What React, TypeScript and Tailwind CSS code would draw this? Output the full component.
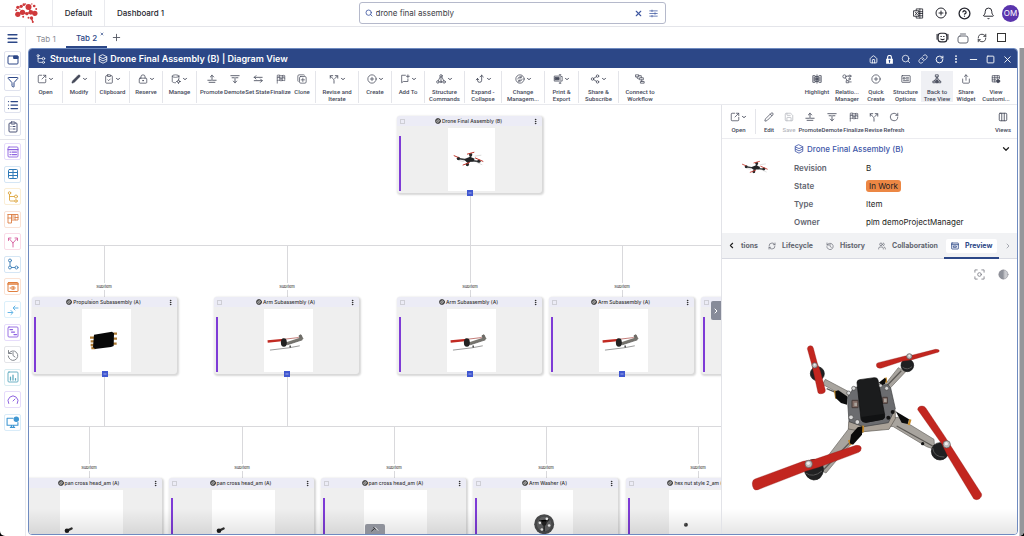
import { useState } from 'react';
import type { ReactNode } from 'react';
import {
  Bell,
  ChevronDown,
  ChevronLeft,
  ChevronRight,
  CircleHelp,
  CirclePlus,
  ClipboardCheck,
  ClipboardList,
  Columns3,
  EllipsisVertical,
  Funnel,
  Gauge,
  House,
  Link,
  List,
  LockKeyhole,
  Menu,
  Minus,
  Pencil,
  Plus,
  RefreshCw,
  RotateCw,
  Save,
  Search,
  Share,
  Share2,
  Square,
  SquareArrowOutUpRight,
  Table,
  Users,
  X,
} from 'lucide-react';

function Svg({ children, className = 'size-[10px]', width = 1.8 }: { children: ReactNode; className?: string; width?: number }) {
  return (
    <svg
      viewBox="0 0 24 24"
      fill="none"
      stroke="currentColor"
      strokeWidth={width}
      strokeLinecap="round"
      strokeLinejoin="round"
      className={`shrink-0 ${className}`}
      aria-hidden="true"
    >
      {children}
    </svg>
  );
}

const PromoteIcon = () => (
  <Svg width={2}><path d="M12 15V3M8 7l4-4 4 4M2 15h8M14 15h8M5 20h14" /></Svg>
);
const DemoteIcon = () => (
  <Svg width={2}><path d="M2 4h20M5 9h4M15 9h4M12 8v13M8 17l4 4 4-4" /></Svg>
);
const SetStateIcon = () => (
  <Svg width={2}><path d="M22 8H3M7 4 3 8l4 4M3 16h19M18 12l4 4-4 4" /></Svg>
);
const FinalizeIcon = () => (
  <Svg width={1.6}>
    <path d="M3 22V3c4-2 7 2 11 1 3-1 5-1 7 0v12c-3-1-5-1-7 0-4 1-7-2-11-1M9 3v12M15 4v12M3 9c4-2 7 1 11 1 3-1 5-1 7 0" />
    <path d="M9 9h6v6H9zM4 4h5v5H4zM15 4h5v5h-5z" fill="currentColor" fillOpacity=".4" stroke="none" />
  </Svg>
);
const CloneIcon = () => (
  <Svg width={1.7}><rect x="6" y="6" width="16" height="16" rx="3" /><path d="M18 3a3 3 0 0 0-2-1H5a3 3 0 0 0-3 3v11c0 1 1 2 1 2M14 10v8M10 14h8" /></Svg>
);
const ReviseIcon = () => (
  <Svg width={2}><path d="M12 22v-6c0-4-3-5-5-7L3 5M3 10V4h6M14 11l6-6M15 4h6v6" /></Svg>
);
const ManageIcon = () => (
  <Svg width={1.7}>
    <ellipse cx="11" cy="5" rx="8" ry="3" /><path d="M3 5v13c0 2 4 3 8 3M19 5v7" /><circle cx="18" cy="18" r="3" /><path d="M18 13v2M18 21v2M13 18h2M21 18h2" />
  </Svg>
);
const AddToIcon = () => (
  <Svg width={1.8}><path d="M13 3H4v18l4-3h11v-6M19 2v7M15.5 5.5h7" /></Svg>
);
const HierarchyIcon = () => (
  <Svg width={1.8}><circle cx="12" cy="4.5" r="3" /><circle cx="4.5" cy="19" r="3" /><circle cx="19.5" cy="19" r="3" /><circle cx="12" cy="19" r="2" /><path d="M12 8v9M10 7l-4.5 9M14 7l4.5 9" /></Svg>
);
const HookIcon = () => (
  <Svg width={2}><path d="M16 3v12a5 5 0 0 1-10 0v-4M6 11l-3 3M6 11l3 3M12 7l4-4 4 4" /></Svg>
);
const ChangeIcon = () => (
  <Svg width={1.8}><circle cx="12" cy="12" r="10" /><path d="M7 12a5 5 0 0 1 8-4M17 12a5 5 0 0 1-8 4M15 5v3h-3M9 19v-3h3M11 12h2" /></Svg>
);
const PrintIcon = () => (
  <Svg width={1.8}><path d="M14 5H3v12h11M6 8h8v6H6zM17 2v20M15 2h4M15 22h4M20 6h2v11h-2" /><path d="M6 9h8v4H6z" fill="currentColor" /></Svg>
);
const WorkflowIcon = () => (
  <Svg width={1.8}><rect x="2" y="2" width="7" height="5" /><rect x="12" y="9" width="8" height="5" /><rect x="14" y="18" width="8" height="4" /><path d="M9 4h6v5M16 14v4M5 7v3l4 2" /></Svg>
);
const HighlightIcon = () => (
  <Svg width={2}><path d="M7 4H2v16h5M17 4h5v16h-5M5 8v8M19 8v8" /><rect x="8" y="6" width="8" height="12" /><path d="M10 9h4v6h-4zM12 2v4M12 18v4" fill="currentColor" /></Svg>
);
const RelationIcon = () => (
  <Svg width={1.8}><circle cx="6" cy="6" r="4" /><circle cx="19" cy="5" r="2.5" /><circle cx="18" cy="12" r="2" /><path d="M8 9l4 6M12 5h4" /><rect x="11" y="16" width="5" height="5" /><path d="M18 19h4" /></Svg>
);
const OptionsIcon = () => (
  <Svg width={1.8}><rect x="2" y="4" width="20" height="16" rx="1" /><path d="M6 9h4v3H6zM13 9h5M13 12h5M6 16h12" /></Svg>
);
const TreeViewIcon = () => (
  <Svg width={2}><rect x="9" y="2" width="6" height="5" /><path d="M12 7v14M12 8 5 17M12 8l7 9M3 17h5v4H3zM16 17h5v4h-5z" /><path d="M10 15h4v6h-4z" fill="currentColor" /></Svg>
);
const CustomViewIcon = () => (
  <Svg width={1.8}><path d="M11 19H3V4h17v7M3 9h17M9 4v15M15 4v7M3 14h8" /><circle cx="17" cy="17" r="4" fill="currentColor" /></Svg>
);
const TreeIcon = ({ className }: { className?: string }) => (
  <Svg className={className} width={1.8}><circle cx="5" cy="4" r="2.5" /><circle cx="18" cy="11" r="3" /><circle cx="18" cy="20" r="2.5" /><path d="M5 7v11c0 1 1 2 2 2h8M5 11h10" /></Svg>
);
const LayersIcon = ({ className }: { className?: string }) => (
  <Svg className={className} width={2}><path d="m12 2 9 4.5v11L12 22l-9-4.5v-11zM3 7l9 4 9-4M3 12l9 4.5 9-4.5" /></Svg>
);
const HistoryIcon = ({ className }: { className?: string }) => (
  <Svg className={className} width={2}><path d="M3 3v6h6M3.5 9a9.5 9.5 0 1 1-1 5M12 7v6l4 3" /></Svg>
);
const ItemIcon = () => (
  <Svg className="size-[6px]" width={3}><circle cx="12" cy="12" r="10" fill="#555" stroke="#333" /><path d="M6 13l6-7 6 4-6 8zM9 12h7" stroke="#ddd" strokeWidth="2" /></Svg>
);

const Logo = () => (
  <svg viewBox="40 7 74 66" className="h-[22px] w-[25px]" role="img" aria-label="Logo">
    <g fill="#cf3a3c">
      <circle cx="83" cy="22" r="9" /><circle cx="61" cy="20" r="5" /><circle cx="69" cy="15" r="4" /><circle cx="51" cy="23" r="5" />
      <circle cx="51" cy="44" r="8" /><circle cx="65" cy="38" r="8" /><circle cx="78" cy="42" r="5" /><circle cx="90" cy="38" r="7" />
      <circle cx="102" cy="41" r="8" /><circle cx="100" cy="19" r="4" /><circle cx="106" cy="28" r="3" /><circle cx="46" cy="32" r="3" />
      <circle cx="57" cy="29" r="2" /><circle cx="74" cy="13" r="2" /><circle cx="67" cy="51" r="3" /><circle cx="83" cy="54" r="3" />
      <circle cx="92" cy="55" r="5" /><circle cx="96" cy="67" r="3" /><circle cx="93" cy="13" r="2" />
    </g>
    <path d="M51 43l14-5 13 4 12-4 12 3M83 22l7 16M92 56l4 11" stroke="#cf3a3c" strokeWidth="4" fill="none" />
  </svg>
);

type Tool = { label: string; icon: ReactNode; width: string; menu?: boolean; active?: boolean; disabled?: boolean };

function ToolButton({ label, icon, width, menu, active, disabled }: Tool) {
  return (
    <button
      type="button"
      disabled={disabled}
      className={`flex h-[31px] shrink-0 flex-col items-center pt-[3px] font-['Roboto',sans-serif] text-[6px] leading-[7px] font-medium ${width} ${active ? 'bg-[#eff0f4]' : ''} ${disabled ? 'text-[#b4b6bd]' : 'text-[#454959]'}`}
    >
      <span className="flex h-[10px] items-center gap-[1px]">
        {icon}
        {menu && <ChevronDown className="size-[6px]" strokeWidth={4} />}
      </span>
      <span className="mt-[4px] whitespace-pre text-center">{label}</span>
    </button>
  );
}

const ic = 'size-[10px] shrink-0';

const toolGroups: Tool[][] = [
  [{ label: 'Open', icon: <SquareArrowOutUpRight className={ic} strokeWidth={1.8} />, width: 'w-[33px]', menu: true }],
  [{ label: 'Modify', icon: <Pencil className={ic} fill="currentColor" strokeWidth={1} />, width: 'w-[32px]', menu: true }],
  [{ label: 'Clipboard', icon: <ClipboardCheck className={ic} strokeWidth={1.8} />, width: 'w-[33px]', menu: true }],
  [{ label: 'Reserve', icon: <LockKeyhole className={ic} strokeWidth={1.8} />, width: 'w-[32px]', menu: true }],
  [{ label: 'Manage', icon: <ManageIcon />, width: 'w-[33px]', menu: true }],
  [
    { label: 'Promote', icon: <PromoteIcon />, width: 'w-[29px]' },
    { label: 'Demote', icon: <DemoteIcon />, width: 'w-[17px]' },
    { label: 'Set State', icon: <SetStateIcon />, width: 'w-[29px]' },
    { label: 'Finalize', icon: <FinalizeIcon />, width: 'w-[17px]' },
    { label: 'Clone', icon: <CloneIcon />, width: 'w-[26px]' },
  ],
  [{ label: 'Revise and\nIterate', icon: <ReviseIcon />, width: 'w-[42px]', menu: true }],
  [{ label: 'Create', icon: <CirclePlus className={ic} strokeWidth={1.8} />, width: 'w-[32px]', menu: true }],
  [{ label: 'Add To', icon: <AddToIcon />, width: 'w-[32px]', menu: true }],
  [{ label: 'Structure\nCommands', icon: <HierarchyIcon />, width: 'w-[39px]', menu: true }],
  [{ label: 'Expand -\nCollapse', icon: <HookIcon />, width: 'w-[36px]', menu: true }],
  [{ label: 'Change\nManagem...', icon: <ChangeIcon />, width: 'w-[42px]', menu: true }],
  [{ label: 'Print &\nExport', icon: <PrintIcon />, width: 'w-[33px]', menu: true }],
  [{ label: 'Share &\nSubscribe', icon: <Share2 className={ic} strokeWidth={1.8} />, width: 'w-[39px]', menu: true }],
  [{ label: 'Connect to\nWorkflow', icon: <WorkflowIcon />, width: 'w-[42px]' }],
];

const viewTools: Tool[] = [
  { label: 'Highlight', icon: <HighlightIcon />, width: 'w-[30px]' },
  { label: 'Relatio...\nManager', icon: <RelationIcon />, width: 'w-[30px]' },
  { label: 'Quick\nCreate', icon: <CirclePlus className={ic} strokeWidth={1.8} />, width: 'w-[28px]' },
  { label: 'Structure\nOptions', icon: <OptionsIcon />, width: 'w-[31px]' },
  { label: 'Back to\nTree View', icon: <TreeViewIcon />, width: 'w-[32px]', active: true },
  { label: 'Share\nWidget', icon: <Share className={ic} strokeWidth={1.8} />, width: 'w-[26px]' },
  { label: 'View\nCustomi...', icon: <CustomViewIcon />, width: 'w-[34px]' },
];

const itemTools: Tool[] = [
  { label: 'Edit', icon: <Pencil className={ic} strokeWidth={1.8} />, width: 'w-[20px]' },
  { label: 'Save', icon: <Save className={ic} strokeWidth={1.8} />, width: 'w-[20px]', disabled: true },
  { label: 'Promote', icon: <PromoteIcon />, width: 'w-[22px]' },
  { label: 'Demote', icon: <DemoteIcon />, width: 'w-[22px]' },
  { label: 'Finalize', icon: <FinalizeIcon />, width: 'w-[21px]' },
  { label: 'Revise', icon: <ReviseIcon />, width: 'w-[19px]' },
  { label: 'Refresh', icon: <RotateCw className={ic} strokeWidth={1.8} />, width: 'w-[22px]' },
];

const rail = 'size-[12px]';
const railTop = [
  { name: 'Dashboards', color: 'text-[#2c4787] border-[#dfe2ee]', icon: <Svg className={rail} width={2}><rect x="2" y="4" width="20" height="16" rx="2" /><path d="M14 4h8v5h-8z" fill="currentColor" /></Svg> },
  { name: 'Filter', color: 'text-[#2c4787] border-[#dfe2ee]', icon: <Funnel className={rail} strokeWidth={2} /> },
  { name: 'List', color: 'text-[#2c4787] border-[#dfe2ee]', icon: <List className={rail} strokeWidth={2.5} /> },
  { name: 'Tasks', color: 'text-[#4b5377] border-[#dfe2ee]', icon: <ClipboardList className={rail} strokeWidth={2} /> },
];
const railItems = [
  { name: 'Properties', color: 'text-[#8e63e0] border-[#e6dcfb]', icon: <Svg className={rail}><rect x="2" y="2" width="20" height="20" rx="2" /><path d="M2 7h20M6 12h1M10 12h9M6 17h1M10 17h9" strokeWidth="2.5" /></Svg> },
  { name: 'Table', color: 'text-[#2f7ab8] border-[#d5e6f5]', icon: <Table className={rail} strokeWidth={2} /> },
  { name: 'Structure', color: 'text-[#dda53d] border-[#fbeed5]', icon: <TreeIcon className={rail} /> },
  { name: 'Board', color: 'text-[#dc7f45] border-[#fae2d5]', icon: <Svg className={rail}><path d="M2 3h20v11h-6V3M2 3v17h7V3M9 14h7M2 10h7M16 9h6M12 3v8" /></Svg> },
  { name: 'Branch', color: 'text-[#d4589b] border-[#fadce8]', icon: <Svg className={rail}><path d="M12 22v-8L5 6M12 14l7-8M3 9V4h5M16 4h5v5" /></Svg> },
  { name: 'Network', color: 'text-[#3f80b8] border-[#d5e6f5]', icon: <Svg className={rail}><circle cx="6" cy="5" r="3" /><circle cx="6" cy="19" r="3" /><circle cx="19" cy="19" r="3" /><path d="M6 8v8M9 19h7" /></Svg> },
  { name: 'Preview', color: 'text-[#e07f3e] border-[#fbe2d3]', icon: <Svg className={rail} width={2}><rect x="2" y="3" width="20" height="18" rx="1" /><path d="M2 6h20" strokeWidth="3" /><path d="M7 14c3-4 7-4 10 0-3 4-7 4-10 0z" /><circle cx="12" cy="14" r="1" /></Svg> },
  { name: 'Compare', color: 'text-[#62b4e6] border-[#dcf0fb]', icon: <Svg className={rail} width={2}><path d="M2 17h9M8 13l4 4-4 4M22 8h-9M16 4l-4 4 4 4" /></Svg> },
  { name: 'Gantt', color: 'text-[#8e63e0] border-[#e6dcfb]', icon: <Svg className={rail}><rect x="2" y="2" width="20" height="20" rx="2" /><path d="M6 7h5M9 12h6M14 17h5" strokeWidth="2.5" /></Svg> },
  { name: 'History', color: 'text-[#85898f] border-[#e4e5e9]', icon: <HistoryIcon className={rail} /> },
  { name: 'Charts', color: 'text-[#5ba8bd] border-[#d9edf2]', icon: <Svg className={rail}><rect x="2" y="2" width="20" height="20" rx="2" /><path d="M7 18v-6M12 18V8M17 18v-3" strokeWidth="2.5" /></Svg> },
  { name: 'Metrics', color: 'text-[#8e63e0] border-[#e6dcfb]', icon: <Gauge className={rail} strokeWidth={2} /> },
  { name: 'Monitor', color: 'text-[#3f97d2] border-[#d9ecf9]', icon: <Svg className="size-[13px]" width={2}><path d="M13 4H2v13h20v-5M8 21h8M10 17v4M14 17v4" /><circle cx="19" cy="6" r="4" fill="currentColor" /></Svg> },
];

const DroneThumb = ({ viewBox, className = 'size-full' }: { viewBox: string; className?: string }) => (
  <svg viewBox={viewBox} className={className} aria-hidden="true">
    <path d="M235 160l30 5 32 4M262 178l8-14 5-20" stroke="#3c3e40" strokeWidth="5" fill="none" />
    <path d="M253 162l18-7 14 6-4 8-20 2z" fill="#222426" />
    <path d="M238 166l14 3M290 171l18 8M285 153l20-3" stroke="#b9b9b9" strokeWidth="1.5" />
    <g fill="#26282a"><circle cx="236" cy="160" r="5" /><circle cx="298" cy="168" r="5" /><circle cx="273" cy="149" r="5" /><circle cx="263" cy="178" r="5" /></g>
    <path d="M222 151l14 6M262 147l22-6M286 158l25 11M249 180l21-8" stroke="#bd3328" strokeWidth="3" />
  </svg>
);

const ArmThumb = () => (
  <svg viewBox="252 86 148 190" className="size-full" aria-hidden="true">
    <path d="M318 191l48-16M360 164l8 14" stroke="#77756f" strokeWidth="8" />
    <path d="M322 194l46-15" stroke="#44433f" strokeWidth="2" />
    <circle cx="362" cy="169" r="5" fill="#6d6b66" />
    <path d="M270 210l58-7 32-6" stroke="#999" strokeWidth="3" fill="none" />
    <path d="M263 184l50-5" stroke="#c12a22" strokeWidth="7" />
    <path d="M315 177l42-5" stroke="#a63b35" strokeWidth="2" />
    <ellipse cx="312" cy="187" rx="9" ry="13" fill="#222" />
    <path d="M331 196v6" stroke="#333" strokeWidth="4" />
  </svg>
);

const PropulsionThumb = () => (
  <svg viewBox="246 627 147 189" className="size-full" aria-hidden="true">
    <path d="M270 713h14M272 724h12M272 735h12M274 744h12M340 701h11M340 716h11M338 731h12" stroke="#b07d36" strokeWidth="7" />
    <path d="M282 704l54-9 6 5-1 38-8 3-48 6-6-5z" fill="#080808" />
  </svg>
);

const ScrewThumb = () => (
  <svg viewBox="180 209 190 190" className="size-full" aria-hidden="true">
    <path d="M201 332l14-7" stroke="#303030" strokeWidth="7" strokeLinecap="round" />
    <circle cx="201" cy="332" r="7" fill="#1d1d1d" />
  </svg>
);

const WasherThumb = () => (
  <svg viewBox="456 209 155 190" className="size-full" aria-hidden="true">
    <circle cx="525" cy="312" r="30" fill="#494a4b" />
    <circle cx="525" cy="312" r="22" fill="#606162" />
    <path d="M510 300l15 12 15-14M525 312v22" stroke="#2d2e2f" strokeWidth="5" />
    <circle cx="525" cy="310" r="7" fill="#222" />
    <g fill="#eee"><circle cx="512" cy="308" r="4" /><circle cx="533" cy="296" r="4" /><circle cx="540" cy="316" r="4" /><circle cx="518" cy="328" r="4" /></g>
  </svg>
);

const NutThumb = () => (
  <svg viewBox="894 209 190 190" className="size-full" aria-hidden="true">
    <circle cx="945" cy="314" r="6" fill="#3b3b3b" /><circle cx="942" cy="311" r="2" fill="#bbb" />
  </svg>
);

type Node = { title: string; place: string; picture: ReactNode; box: string; expandable?: boolean };

// places are relative to the canvas corner
const nodes: Node[] = [
  { title: 'Drone Final Assembly (B)', place: 'left-[368px] top-[11px]', picture: <DroneThumb viewBox="205 68 141 190" />, box: 'w-[47px]', expandable: true },
  { title: 'Propulsion Subassembly (A)', place: 'left-[3px] top-[192px]', picture: <PropulsionThumb />, box: 'w-[49px]', expandable: true },
  { title: 'Arm Subassembly (A)', place: 'left-[185px] top-[192px]', picture: <ArmThumb />, box: 'w-[49px]', expandable: true },
  { title: 'Arm Subassembly (A)', place: 'left-[368px] top-[192px]', picture: <ArmThumb />, box: 'w-[49px]', expandable: true },
  { title: 'Arm Subassembly (A)', place: 'left-[520px] top-[192px]', picture: <ArmThumb />, box: 'w-[49px]', expandable: true },
  { title: 'Arm Subassembly (A)', place: 'left-[672px] top-[192px]', picture: <ArmThumb />, box: 'w-[49px]', expandable: true },
  { title: 'pan cross head_am (A)', place: 'left-[-12px] top-[373px]', picture: <ScrewThumb />, box: 'w-[63px]' },
  { title: 'pan cross head_am (A)', place: 'left-[140px] top-[373px]', picture: <ScrewThumb />, box: 'w-[63px]' },
  { title: 'pan cross head_am (A)', place: 'left-[292px] top-[373px]', picture: <ScrewThumb />, box: 'w-[63px]' },
  { title: 'Arm Washer (A)', place: 'left-[444px] top-[373px]', picture: <WasherThumb />, box: 'w-[52px]' },
  { title: 'hex nut style 2_am (A)', place: 'left-[597px] top-[373px]', picture: <NutThumb />, box: 'w-[63px]' },
];

const links = [
  { x: 75, y: 140, to: 193 },
  { x: 258, y: 140, to: 193 },
  { x: 441, y: 140, to: 193 },
  { x: 593, y: 140, to: 193 },
  { x: 60, y: 321, to: 374 },
  { x: 213, y: 321, to: 374 },
  { x: 365, y: 321, to: 374 },
  { x: 517, y: 321, to: 374 },
  { x: 669, y: 321, to: 374 },
];

function NodeCard({ title, place, picture, box, expandable }: Node) {
  return (
    <article className={`absolute h-[77px] w-[145px] rounded-[3px] bg-[#efefef] shadow-[1px_1px_2px_1px_rgba(0,0,0,0.16)] ${place}`}>
      <header className="flex h-[10px] items-center justify-between rounded-t-[3px] bg-[#ececf6] px-[3px]">
        <input type="checkbox" aria-label={`Select ${title}`} className="size-[5px] appearance-none border border-[#cfcfd6]" />
        <h3 className="flex items-center gap-[1px] whitespace-nowrap text-[5px] leading-[8px] font-medium text-[#333]">
          <ItemIcon />
          {title}
        </h3>
        <button type="button" aria-label={`${title} menu`} className="text-[#222]">
          <EllipsisVertical className="size-[7px]" strokeWidth={3} />
        </button>
      </header>
      <div className="relative flex h-[67px] justify-center pt-[2px] pl-[3px]">
        <span className="absolute bottom-[2px] left-[2px] h-[55px] w-[2px] bg-[#7e3bd6]" />
        <div className={`h-[63px] bg-white ${box}`}>{picture}</div>
      </div>
      {expandable && (
        <button type="button" aria-label={`Collapse ${title}`} className="absolute bottom-[-3px] left-[70px] flex size-[6px] items-center justify-center bg-[#4057d0] text-white">
          <Minus className="size-[4px]" strokeWidth={3} />
        </button>
      )}
    </article>
  );
}

function Diagram() {
  return (
    <section aria-label="Diagram" className="relative min-w-0 flex-1 overflow-hidden bg-white">
      <svg className="absolute inset-0 size-full" stroke="#d9d9dc" aria-hidden="true">
        <path d="M0 140.5H2000M0 321.5H2000M441.5 88V140M75.5 269V321M258.5 269V321" />
        {links.map((l) => (
          <path key={`${l.x}-${l.y}`} d={`M${l.x + 0.5} ${l.y}V${l.to}`} />
        ))}
      </svg>
      {links.map((l) => (
        <span
          key={`${l.x}-${l.y}`}
          className="absolute h-[7px] w-[18px] bg-white text-center text-[4px] leading-[7px] text-[#222]"
          style={{ left: l.x - 9, top: l.y + 38 }}
        >
          SubItem
        </span>
      ))}
      {nodes.map((n) => (
        <NodeCard key={n.place} {...n} />
      ))}
      <div className="pointer-events-none absolute inset-x-0 bottom-0 h-[26px] bg-gradient-to-b from-transparent to-black/10" />
      <button type="button" aria-label="Toggle panel" className="absolute top-[196px] right-0 flex h-[19px] w-[10px] items-center justify-center rounded-l-[2px] bg-[#878b99] text-white">
        <ChevronRight className="size-[8px]" strokeWidth={3} />
      </button>
      <div className="absolute bottom-0 left-[336px] flex h-[10px] w-[20px] items-center justify-center rounded-t-[2px] bg-[#8f929b] text-[#333]">
        <Svg className="size-[8px]" width={3}><path d="M2 18l7-6M8 8l5 5" /><path d="M14 8l7 8" stroke="#ddd" /></Svg>
      </div>
    </section>
  );
}

// Large 3D preview of the assembly
function DronePreview() {
  return (
    <svg viewBox="0 0 861 642" className="h-[214px] w-[287px]" role="img" aria-label="Drone preview">
      <g fill="#a8a49e" stroke="#6a6762" strokeWidth="2">
        <path d="M286 178l72 38-4 20-76-43z" />
        <path d="M505 143l22 12-50 53-14-12z" />
        <path d="M357 325l43 10-62 64-50 60-24-12z" />
        <path d="M478 294l26-2 108 66 2 30-24-8-100-60-16-2z" />
      </g>
      <path d="M290 206l66 28M470 198l44-46M282 448l75-78M500 318l108 60" stroke="#5d5a56" strokeWidth="4" />
      <path d="M356 305l-1 22 46 8 76-7 19-32v-24z" fill="#aaa298" stroke="#5a5650" strokeWidth="2" />
      <path d="M372 202l102-8 8 10 14 62-21 42-74 12-44-15-5-72z" fill="#6b6c6f" stroke="#3d3e40" strokeWidth="2" />
      <path d="M366 241h18v22h-18zM458 232h14v18h-14z" fill="#826d66" stroke="#463c39" strokeWidth="3" />
      <path d="M373 248h8v10h-8zM462 236h8v10h-8z" fill="#a9a29b" />
      <path d="M315 212l4 24M467 173l1 15M541 298l-5 17M399 317l-1 20M357 360l5 15" stroke="#c58c2c" strokeWidth="7" />
      <g fill="#0b0b0b">
        <path d="M316 214l9-3 26 18v25l-18-5-16-15z" />
        <path d="M446 188l18-14 4 3-3 15-8 4z" />
        <path d="M497 274l40 24-4 14-18-4z" />
        <path d="M397 319l-1 25-27 30-10-4 4-26 20-22z" />
      </g>
      <path d="M381 188q0-8 8-9l44-6q9-1 11 7l20 104q1 12-7 14l-49 9q-12 1-15-9z" fill="#1b1c1d" stroke="#0c0c0c" strokeWidth="2" />
      <path d="M394 291l69-10 1 12q-1 5-7 6l-49 9q-10 0-13-7z" fill="#111213" />
      <g fill="#d8d8d8" stroke="#4b4b4b" strokeWidth="2">
        <circle cx="371" cy="205" r="6" /><circle cx="356" cy="219" r="6" /><circle cx="363" cy="292" r="7" /><circle cx="382" cy="306" r="7" /><circle cx="452" cy="197" r="5" /><circle cx="470" cy="205" r="6" />
      </g>
      <g fill="#141414"><circle cx="488" cy="276" r="6" /><circle cx="475" cy="293" r="6" /><circle cx="578" cy="371" r="5" /></g>
      <g fill="#202122" stroke="#111" strokeWidth="2">
        <circle cx="262" cy="161" r="21" /><circle cx="532" cy="136" r="19" /><circle cx="630" cy="394" r="26" />
        <path d="M222 446q5-26 30-28 26 1 29 31-5 31-30 31-25-4-29-34z" />
      </g>
      <path d="M608 384q4 28 35 27M227 459q22 16 49-6M518 142q14 10 28-2" stroke="#555" strokeWidth="3" fill="none" />
      <g fill="#c2261f" stroke="#8e1914" strokeWidth="1" strokeLinejoin="round">
        <path d="M232 86q0-7 8-9 8-1 10 7l12 46 8 20 16 60q1 8-6 10-11 4-16-2l-17-78z" />
        <path d="M439 135q0-6 6-7l80-20 24-3 67-17q12-1 12 5 0 4-12 6l-69 20-28 4-64 21q-15 3-16-9z" />
        <path d="M67 488q1-9 8-11l144-53 35-6 124-42q14-2 16 8 0 9-8 13l-120 45-38 11-144 56q-9 3-13-3-5-8-4-18z" />
        <path d="M563 269q0-10 13-11 8 0 12 7l57 85 20 32 90 140q2 8-6 14-10 6-18 0L652 406l-16-33z" />
      </g>
      <g fill="#bdbdbd" stroke="#555" strokeWidth="2">
        <circle cx="254" cy="136" r="8" /><circle cx="538" cy="109" r="8" /><circle cx="236" cy="432" r="11" /><circle cx="650" cy="373" r="11" />
      </g>
      <g fill="#eee"><circle cx="254" cy="134" r="3" /><circle cx="538" cy="107" r="3" /><circle cx="235" cy="430" r="5" /><circle cx="649" cy="371" r="5" /></g>
    </svg>
  );
}

const tabs = [
  { name: 'Lifecycle', icon: <RefreshCw className="size-[8px]" strokeWidth={2} />, place: 'ml-[10px]' },
  { name: 'History', icon: <HistoryIcon className="size-[8px]" />, place: 'ml-[13px]' },
  { name: 'Collaboration', icon: <Users className="size-[8px]" strokeWidth={2} />, place: 'ml-[13px]' },
];

function ItemPanel() {
  const [tab, setTab] = useState('Preview');

  return (
    <aside className="flex w-[296px] shrink-0 flex-col border-l border-[#e2e3e8] bg-white">
      <div className="flex h-[34px] shrink-0 items-start border-b border-[#ececf0] pt-[4px]">
        <ToolButton label="Open" icon={<SquareArrowOutUpRight className={ic} strokeWidth={1.8} />} width="w-[33px]" menu />
        <span className="mr-[3px] h-[25px] w-px bg-[#e4e5ea]" />
        {itemTools.map((t) => (
          <ToolButton key={t.label} {...t} />
        ))}
        <span className="flex-1" />
        <ToolButton label="Views" icon={<Columns3 className={ic} strokeWidth={2} />} width="w-[28px]" />
      </div>

      <div className="flex h-[94px] shrink-0 pt-[1px]">
        <div className="flex w-[72px] shrink-0 justify-center pt-[18px] pr-[6px]">
          <DroneThumb viewBox="218 136 98 50" className="h-[18px] w-[28px]" />
        </div>
        <div className="min-w-0 flex-1 text-[8px] leading-[18px]">
          <div className="flex items-center gap-[3px] text-[#4157a8]">
            <LayersIcon className="size-[10px]" />
            <h2 className="flex-1 font-medium">Drone Final Assembly (B)</h2>
            <button type="button" aria-label="Collapse details" className="mr-[6px] text-[#222]">
              <ChevronDown className="size-[10px]" strokeWidth={3} />
            </button>
          </div>
          <dl className="mt-[1px] grid grid-cols-[72px_1fr] text-[#1c1d22]">
            <dt className="font-semibold text-[#62656f]">Revision</dt>
            <dd>B</dd>
            <dt className="font-semibold text-[#62656f]">State</dt>
            <dd className="flex items-center"><span className="rounded-[3px] bg-[#ec8744] px-[3px] leading-[12px]">In Work</span></dd>
            <dt className="font-semibold text-[#62656f]">Type</dt>
            <dd>Item</dd>
            <dt className="font-semibold text-[#62656f]">Owner</dt>
            <dd>plm demoProjectManager</dd>
          </dl>
        </div>
      </div>

      <nav className="flex h-[26px] shrink-0 items-center border-b border-[#d8dae2] bg-[#f1f2f4] pl-[5px] text-[7px] leading-[10px] font-bold text-[#62656f]">
        <button type="button" aria-label="Previous tabs" className="text-[#222]"><ChevronLeft className="size-[9px]" strokeWidth={3} /></button>
        <button type="button" onClick={() => setTab('Relations')} className="ml-[5px]">tions</button>
        {tabs.map((t) => (
          <button key={t.name} type="button" onClick={() => setTab(t.name)} className={`flex items-center gap-[6px] ${t.place}`}>
            {t.icon}
            {t.name}
          </button>
        ))}
        <button
          type="button"
          onClick={() => setTab('Preview')}
          className={`ml-[6px] flex h-[26px] items-center border-b-2 px-[2px] pt-[2px] ${tab === 'Preview' ? 'border-[#2c4787] text-[#2c4787]' : 'border-transparent'}`}
        >
          <span className="flex h-[14px] items-center gap-[6px] rounded-[2px] bg-white px-[5px]">
            <Svg className="size-[8px]" width={2.4}><rect x="2" y="3" width="20" height="18" rx="1" /><path d="M2 8h20M8 12h8v4H8z" /></Svg>
            Preview
          </span>
        </button>
        <button type="button" aria-label="Next tabs" className="mr-[5px] ml-auto text-[#999ca6]"><ChevronRight className="size-[8px]" strokeWidth={2.5} /></button>
      </nav>

      <div className="relative flex min-h-0 flex-1 flex-col justify-between overflow-hidden">
        <div className="flex items-center justify-end gap-[13px] pt-[10px] pr-[8px] text-[#85878e]">
          <button type="button" aria-label="Fit to view">
            <Svg className="size-[11px]" width={2}><path d="M2 7V2h5M17 2h5v5M22 17v5h-5M7 22H2v-5" /><circle cx="12" cy="12" r="4" /></Svg>
          </button>
          <button type="button" aria-label="Shading">
            <Svg className="size-[11px]" width={1}><circle cx="12" cy="12" r="10" fill="#c9cacf" /><path d="M12 2a10 10 0 0 0 0 20z" fill="#8f929b" /></Svg>
          </button>
        </div>
        <div className="flex justify-end">
          <DronePreview />
        </div>
        <div className="pointer-events-none absolute inset-x-0 bottom-0 h-[26px] bg-gradient-to-b from-transparent to-black/10" />
      </div>
    </aside>
  );
}

export default function App() {
  const [query, setQuery] = useState('drone final assembly');

  return (
    <div className="h-screen bg-black">
      <div className="flex h-full flex-col overflow-hidden rounded-b-[5px] bg-white font-['Inter',sans-serif] text-[#25262e]">
        <header className="grid h-[27px] shrink-0 grid-cols-[1fr_307px_1fr] items-center border-b border-[#e4e5ea] text-[8px] font-medium">
          <div className="flex h-full items-center">
            <div className="flex w-[52px] justify-center"><Logo /></div>
            <button type="button" className="h-full w-[53px] border-x border-[#e9eaee]">Default</button>
            <button type="button" className="h-full px-[12px]">Dashboard 1</button>
          </div>
          <label className="flex h-[22px] items-center gap-[3px] rounded-[3px] border border-[#b5b9cb] px-[5px] text-[#3e57a0]">
            <Search className="size-[8px]" strokeWidth={2.5} />
            <input
              aria-label="Search"
              value={query}
              onChange={(e) => setQuery(e.target.value)}
              className="min-w-0 flex-1 bg-transparent text-[8px] font-normal text-[#3b3c44] outline-none"
            />
            <button type="button" aria-label="Clear search" onClick={() => setQuery('')}><X className="size-[9px]" strokeWidth={3} /></button>
            <button type="button" aria-label="Search filters" className="mr-[2px] ml-[3px]">
              <Svg className="size-[9px]" width={2}><path d="M2 5h20M2 12h20M2 19h20M8 3v4M16 10v4M8 17v4" /></Svg>
            </button>
          </label>
          <div className="flex items-center justify-end gap-[11px] pr-[5px]">
            <button type="button" aria-label="Export to Excel">
              <Svg className="size-[11px]"><path d="M7 6V2h14v20H7v-4M12 8h9M12 12h9M12 17h9M15 2v20" /><rect x="2" y="6" width="11" height="12" /><path d="M5 9l5 6M10 9l-5 6" /></Svg>
            </button>
            <button type="button" aria-label="Add"><CirclePlus className="size-[12px]" strokeWidth={2} /></button>
            <button type="button" aria-label="Help"><CircleHelp className="size-[13px]" strokeWidth={2.4} /></button>
            <button type="button" aria-label="Notifications"><Bell className="size-[13px]" strokeWidth={1.8} /></button>
            <button type="button" className="-ml-[4px] size-[17px] rounded-full bg-[#5a35ad] text-[8px] font-normal text-white">OM</button>
          </div>
        </header>

        <div className="flex min-h-0 flex-1">
          <nav className="flex w-[26px] shrink-0 flex-col items-center border-r border-[#e9eaee]">
            <button type="button" aria-label="Menu" className="mt-[5px] text-[#2c4787]"><Menu className="size-[13px]" strokeWidth={3} /></button>
            <div className="mt-[6px] flex h-[85px] shrink-0 flex-col justify-between">
              {railTop.map((r) => (
                <button key={r.name} type="button" aria-label={r.name} className={`flex size-[17px] items-center justify-center rounded-[2px] border ${r.color}`}>{r.icon}</button>
              ))}
            </div>
            <div className="my-[3px] h-px w-full shrink-0 bg-[#e4e5ea]" />
            <div className="flex h-[288px] shrink-0 flex-col justify-between">
              {railItems.map((r) => (
                <button key={r.name} type="button" aria-label={r.name} className={`flex size-[17px] items-center justify-center rounded-[2px] border ${r.color}`}>{r.icon}</button>
              ))}
            </div>
          </nav>

          <div className="flex min-w-0 flex-1 flex-col">
            <div className="flex h-[21px] shrink-0 items-center justify-between pr-[18px]">
              <div className="flex h-full items-center text-[8px]">
                <button type="button" className="w-[40px] pt-[2px] text-[#8b8d95]">Tab 1</button>
                <div className="flex h-full w-[41px] items-center justify-center border-b-2 border-[#2c4787] pt-[3px] font-medium text-[#2c4787]">
                  <button type="button">Tab 2</button>
                  <button type="button" aria-label="Close Tab 2" className="-mr-[7px] ml-[3px] self-start pt-[2px]"><X className="size-[4px]" strokeWidth={4} /></button>
                </div>
                <button type="button" aria-label="New tab" className="ml-[4px] text-[#555964]"><Plus className="size-[11px]" strokeWidth={2} /></button>
              </div>
              <div className="flex items-center gap-[8px]">
                <button type="button" aria-label="Assistant">
                  <Svg className="size-[13px]" width={2}><rect x="4" y="4" width="16" height="16" rx="5" /><path d="M2 6v9M22 6v9M9 10h1M14 10h1M9 15q3 2 6 0" /></Svg>
                </button>
                <button type="button" aria-label="Collections" className="text-[#666a75]">
                  <Svg className="size-[12px]" width={2}><rect x="2" y="8" width="20" height="14" rx="4" /><path d="M7 4h10" /></Svg>
                </button>
                <button type="button" aria-label="Refresh"><RefreshCw className="size-[10px]" strokeWidth={2} /></button>
                <button type="button" aria-label="Maximize" className="ml-[2px] size-[9px] border border-[#333]" />
              </div>
            </div>

            <div className="flex min-h-0 flex-1 pl-[2px]">
              <main className="mb-[1px] flex min-w-0 flex-1 flex-col overflow-hidden rounded-[4px] border border-[#6f8bc0] bg-white">
                <div className="flex h-[19px] shrink-0 items-center justify-between bg-[#2c4787] pt-[1px] pr-[4px] pl-[7px] text-white">
                  <h1 className="flex items-center gap-[2px] text-[9px] leading-[12px] font-semibold">
                    <TreeIcon className="mr-[2px] size-[10px]" />
                    <span>Structure |</span>
                    <LayersIcon className="size-[10px]" />
                    <span>Drone Final Assembly (B) | Diagram View</span>
                  </h1>
                  <div className="flex items-center gap-[7px]">
                    <button type="button" aria-label="Home"><House className="size-[9px]" strokeWidth={2.2} /></button>
                    <button type="button" aria-label="Lock">
                      <Svg className="size-[9px]" width={3}><path d="M7 11V6a5 5 0 0 1 10 0v4" /><path d="M3 10h18v13H3z" fill="currentColor" stroke="none" /><path d="M12 14v5" stroke="#2c4787" /></Svg>
                    </button>
                    <button type="button" aria-label="Find"><Search className="size-[10px]" strokeWidth={1.8} /></button>
                    <button type="button" aria-label="Link"><Link className="size-[10px]" strokeWidth={1.8} /></button>
                    <button type="button" aria-label="Reload"><RotateCw className="size-[9px]" strokeWidth={2.5} /></button>
                    <button type="button" aria-label="More"><EllipsisVertical className="size-[10px]" strokeWidth={2.5} /></button>
                    <button type="button" aria-label="Minimize"><Minus className="size-[11px]" strokeWidth={2} /></button>
                    <button type="button" aria-label="Restore"><Square className="size-[9px]" strokeWidth={2.4} /></button>
                    <button type="button" aria-label="Close"><X className="size-[11px]" strokeWidth={2} /></button>
                  </div>
                </div>

                <div className="flex h-[37px] shrink-0 items-start justify-between border-b border-[#e9eaee] pt-[3px] pr-[4px]">
                  <div className="flex">
                    {toolGroups.map((group) => (
                      <div key={group[0].label} className="flex h-[32px] border-r border-[#e4e5ea] last:border-r-0">
                        {group.map((t) => (
                          <ToolButton key={t.label} {...t} />
                        ))}
                      </div>
                    ))}
                  </div>
                  <div className="flex">
                    {viewTools.map((t) => (
                      <ToolButton key={t.label} {...t} />
                    ))}
                  </div>
                </div>

                <div className="flex min-h-0 flex-1">
                  <Diagram />
                  <ItemPanel />
                </div>
              </main>
              <div className="ml-px w-[5px] shrink-0 border-l border-[#c8cad0] bg-[#95979b]" />
            </div>
          </div>
        </div>
      </div>
    </div>
  );
}
